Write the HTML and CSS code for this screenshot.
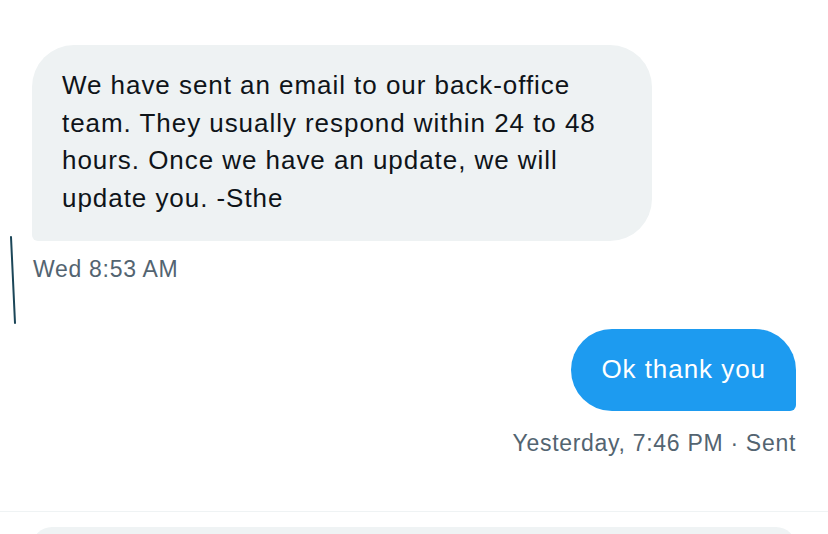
FILE: index.html
```html
<!DOCTYPE html>
<html lang="en">
<head>
<meta charset="utf-8">
<title>Messages</title>
<link rel="stylesheet" href="styles.css">
</head>
<body>
<div class="thread">
  <div class="msg msg-in">
    <div class="bubble bubble-in">We have sent an email to our back-office team. They usually respond within 24 to 48 hours. Once we have an update, we will update you. -Sthe</div>
    <div class="meta">Wed 8:53 AM</div>
  </div>
  <div class="msg msg-out">
    <div class="bubble bubble-out">Ok thank you</div>
    <div class="meta">Yesterday, 7:46 PM · Sent</div>
  </div>
</div>
<div class="composer">
  <div class="composer-box"></div>
</div>
<svg class="edge-mark" width="10" height="90" viewBox="0 0 10 90" aria-hidden="true">
  <path d="M2 2 L6 88" stroke="#1b4658" stroke-width="2" stroke-linecap="round" fill="none"/>
</svg>
</body>
</html>
```

FILE: styles.css
```css
html, body {
  margin: 0;
  padding: 0;
  background: #ffffff;
  font-family: "Liberation Sans", Arial, sans-serif;
  overflow: hidden;
}

.thread {
  padding: 45px 32px 0 32px;
  display: flex;
  flex-direction: column;
}

.msg {
  display: flex;
  flex-direction: column;
}

.msg-in {
  align-items: flex-start;
}

.msg-out {
  align-items: flex-end;
  margin-top: 46px;
}

.bubble {
  font-size: 26px;
  line-height: 37.7px;
  letter-spacing: 0.95px;
  box-sizing: border-box;
}

.bubble-in {
  width: 620px;
  background: #eef2f3;
  color: #0f1419;
  padding: 22px 30px 23px 30px;
  border-radius: 42px 42px 42px 6px;
}

.bubble-out {
  background: #1d9bf0;
  color: #ffffff;
  padding: 22px 30px 22px 30px;
  border-radius: 41px 41px 6px 41px;
}

.meta {
  font-size: 23px;
  line-height: 28px;
  letter-spacing: 0.7px;
  color: #536471;
  margin-top: 14px;
  padding-left: 1px;
}

.msg-out .meta {
  margin-top: 18px;
  padding-left: 0;
}

.composer {
  position: fixed;
  left: 0;
  right: 0;
  top: 511px;
  border-top: 1px solid #eff3f4;
  padding: 15px 32px 0 32px;
}

.composer-box {
  height: 40px;
  background: #eff3f4;
  border-radius: 20px;
}

.edge-mark {
  position: absolute;
  left: 9px;
  top: 235px;
}
```
